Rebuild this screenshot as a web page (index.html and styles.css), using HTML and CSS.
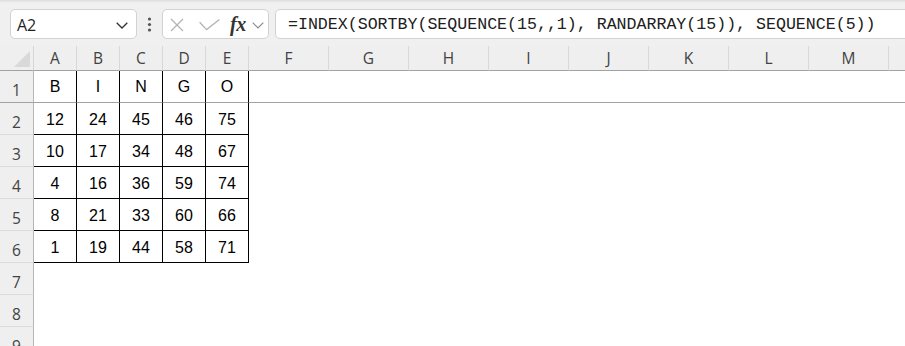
FILE: index.html
```html
<!DOCTYPE html>
<html>
<head>
<meta charset="utf-8">
<link rel="stylesheet" href="styles.css">
</head>
<body>
<div class="toolbar">
  <div class="namebox">
    <span class="ref">A2</span>
    <svg class="chev" width="12" height="7" viewBox="0 0 12 7"><polyline points="0.7,0.7 6,6 11.3,0.7" fill="none" stroke="#333" stroke-width="1.3"/></svg>
  </div>
  <div class="more">
    <svg width="5" height="15" viewBox="0 0 5 15"><circle cx="2.5" cy="2" r="1.6" fill="#555"/><circle cx="2.5" cy="7.5" r="1.6" fill="#555"/><circle cx="2.5" cy="13" r="1.6" fill="#555"/></svg>
  </div>
  <div class="fxbox">
    <svg class="ico-x" width="14" height="14" viewBox="0 0 14 14"><path d="M1 1 L13 13 M13 1 L1 13" stroke="#b3b3b3" stroke-width="1.3" fill="none"/></svg>
    <svg class="ico-check" width="21" height="12" viewBox="0 0 21 12"><polyline points="0.6,3.2 7.6,10.6 20.4,0.6" fill="none" stroke="#b3b3b3" stroke-width="1.3"/></svg>
    <span class="fx">fx</span>
    <svg class="ico-chev" width="12" height="7" viewBox="0 0 12 7"><polyline points="0.7,0.7 6,6 11.3,0.7" fill="none" stroke="#8a8a8a" stroke-width="1.2"/></svg>
  </div>
  <div class="formula">=INDEX(SORTBY(SEQUENCE(15,,1), RANDARRAY(15)), SEQUENCE(5))</div>
</div>

<div class="sheet">
  <div class="corner"><svg width="16" height="16" viewBox="0 0 16 16"><polygon points="16,0 16,16 0,16" fill="#d9d9d9"/></svg></div>
  <div class="ch">A</div><div class="ch">B</div><div class="ch">C</div><div class="ch">D</div><div class="ch">E</div>
  <div class="ch">F</div><div class="ch">G</div><div class="ch">H</div><div class="ch">I</div><div class="ch">J</div><div class="ch">K</div><div class="ch">L</div><div class="ch">M</div><div class="ch"></div>

  <div class="rh frz">1</div>
  <div class="c t frz">B</div><div class="c t frz">I</div><div class="c t frz">N</div><div class="c t frz">G</div><div class="c t frz">O</div>
  <div class="c frz"></div><div class="c frz"></div><div class="c frz"></div><div class="c frz"></div><div class="c frz"></div><div class="c frz"></div><div class="c frz"></div><div class="c frz"></div><div class="c frz"></div>

  <div class="rh">2</div>
  <div class="c t n">12</div><div class="c t n">24</div><div class="c t n">45</div><div class="c t n">46</div><div class="c t n">75</div>
  <div class="c"></div><div class="c"></div><div class="c"></div><div class="c"></div><div class="c"></div><div class="c"></div><div class="c"></div><div class="c"></div><div class="c"></div>

  <div class="rh">3</div>
  <div class="c t n">10</div><div class="c t n">17</div><div class="c t n">34</div><div class="c t n">48</div><div class="c t n">67</div>
  <div class="c"></div><div class="c"></div><div class="c"></div><div class="c"></div><div class="c"></div><div class="c"></div><div class="c"></div><div class="c"></div><div class="c"></div>

  <div class="rh">4</div>
  <div class="c t n">4</div><div class="c t n">16</div><div class="c t n">36</div><div class="c t n">59</div><div class="c t n">74</div>
  <div class="c"></div><div class="c"></div><div class="c"></div><div class="c"></div><div class="c"></div><div class="c"></div><div class="c"></div><div class="c"></div><div class="c"></div>

  <div class="rh">5</div>
  <div class="c t n">8</div><div class="c t n">21</div><div class="c t n">33</div><div class="c t n">60</div><div class="c t n">66</div>
  <div class="c"></div><div class="c"></div><div class="c"></div><div class="c"></div><div class="c"></div><div class="c"></div><div class="c"></div><div class="c"></div><div class="c"></div>

  <div class="rh">6</div>
  <div class="c t n">1</div><div class="c t n">19</div><div class="c t n">44</div><div class="c t n">58</div><div class="c t n">71</div>
  <div class="c"></div><div class="c"></div><div class="c"></div><div class="c"></div><div class="c"></div><div class="c"></div><div class="c"></div><div class="c"></div><div class="c"></div>

  <div class="rh">7</div>
  <div class="c"></div><div class="c"></div><div class="c"></div><div class="c"></div><div class="c"></div>
  <div class="c"></div><div class="c"></div><div class="c"></div><div class="c"></div><div class="c"></div><div class="c"></div><div class="c"></div><div class="c"></div><div class="c"></div>

  <div class="rh">8</div>
  <div class="c"></div><div class="c"></div><div class="c"></div><div class="c"></div><div class="c"></div>
  <div class="c"></div><div class="c"></div><div class="c"></div><div class="c"></div><div class="c"></div><div class="c"></div><div class="c"></div><div class="c"></div><div class="c"></div>

  <div class="rh">9</div>
  <div class="c"></div><div class="c"></div><div class="c"></div><div class="c"></div><div class="c"></div>
  <div class="c"></div><div class="c"></div><div class="c"></div><div class="c"></div><div class="c"></div><div class="c"></div><div class="c"></div><div class="c"></div><div class="c"></div>
</div>
</body>
</html>
```

FILE: styles.css
```css
* { box-sizing: border-box; }
html, body {
  margin: 0;
  padding: 0;
  width: 905px;
  height: 346px;
  overflow: hidden;
  background: #ffffff;
}
body {
  font-family: "Open Sans", "Noto Sans", sans-serif;
}

/* ---------- formula bar ---------- */
.toolbar {
  height: 46px;
  display: flex;
  align-items: flex-start;
  padding: 9px 0 0 10px;
  background: linear-gradient(#dcdcdc 0, #ececec 2px, #f0f0f0 4px);
  width: 905px;
  overflow: hidden;
}
.namebox {
  width: 127px;
  height: 30px;
  flex: none;
  background: #fff;
  border: 1px solid #d2d2d2;
  border-radius: 5px;
  display: flex;
  align-items: center;
  justify-content: space-between;
  padding: 0 8px 0 6px;
}
.ref {
  font-family: "Open Sans", sans-serif;
  font-size: 16px;
  color: #1f1f1f;
  line-height: 1;
  padding-top: 1px;
}
.chev { display: block; margin-top: 2px; }
.more {
  width: 25px;
  height: 30px;
  flex: none;
  display: flex;
  align-items: center;
  justify-content: center;
  padding-top: 1px;
  padding-right: 1px;
}
.more svg { display: block; }
.fxbox {
  width: 107px;
  height: 30px;
  flex: none;
  background: #fff;
  border: 1px solid #d2d2d2;
  border-radius: 5px;
  display: flex;
  align-items: center;
  padding-left: 7px;
}
.fxbox svg { display: block; flex: none; }
.ico-x { margin-top: 1px; }
.ico-check { margin-left: 15px; margin-top: 1px; }
.fx {
  font-family: "Liberation Serif", "DejaVu Serif", serif;
  font-style: italic;
  font-weight: bold;
  font-size: 20px;
  color: #333;
  margin-left: 10px;
  line-height: 1;
  letter-spacing: -0.5px;
}
.ico-chev { margin-left: 6px; margin-top: 2px; }
.formula {
  flex: none;
  width: 650px;
  height: 30px;
  margin-left: 6px;
  background: #fff;
  border: 1px solid #d2d2d2;
  border-radius: 5px;
  display: flex;
  align-items: center;
  padding-left: 12px;
  padding-top: 1px;
  font-family: "Liberation Mono", "DejaVu Sans Mono", monospace;
  font-size: 16.6px;
  color: #202020;
  white-space: nowrap;
}

/* ---------- sheet grid ---------- */
.sheet {
  display: grid;
  grid-template-columns: 34px repeat(5, 43px) repeat(9, 80px);
  grid-template-rows: 25px;
  grid-auto-rows: 32px;
  width: 969px;
}
.corner {
  background: #efefef;
  border-right: 1px solid #d6d6d6;
  border-bottom: 1px solid #a2a2a2;
  display: flex;
  align-items: flex-end;
  justify-content: flex-end;
  padding: 0 3px 3px 0;
}
.corner svg { display: block; }
.ch {
  background: #efefef;
  border-right: 1px solid #d8d8d8;
  border-bottom: 1px solid #a2a2a2;
  display: flex;
  align-items: center;
  justify-content: center;
  font-family: "Open Sans", sans-serif;
  font-size: 15.5px;
  color: #424242;
  line-height: 1;
  padding-top: 1px;
}
.rh {
  background: #efefef;
  border-right: 1px solid #b6b6b6;
  border-bottom: 1px solid #dcdcdc;
  display: flex;
  align-items: flex-end;
  justify-content: center;
  padding-bottom: 4px;
  font-family: "Open Sans", sans-serif;
  font-size: 15.5px;
  color: #424242;
  line-height: 1;
}
.c {
  background: #fff;
}
.t {
  border-right: 1px solid #000;
  border-bottom: 1px solid #000;
  display: flex;
  align-items: center;
  justify-content: center;
  font-family: "Liberation Sans", Arial, sans-serif;
  font-size: 16px;
  color: #000;
  line-height: 1;
}
.t.n { padding-top: 2px; }
.frz { border-bottom: 1px solid #a2a2a2; }
.rh.frz { border-bottom: 1px solid #a2a2a2; }
```
